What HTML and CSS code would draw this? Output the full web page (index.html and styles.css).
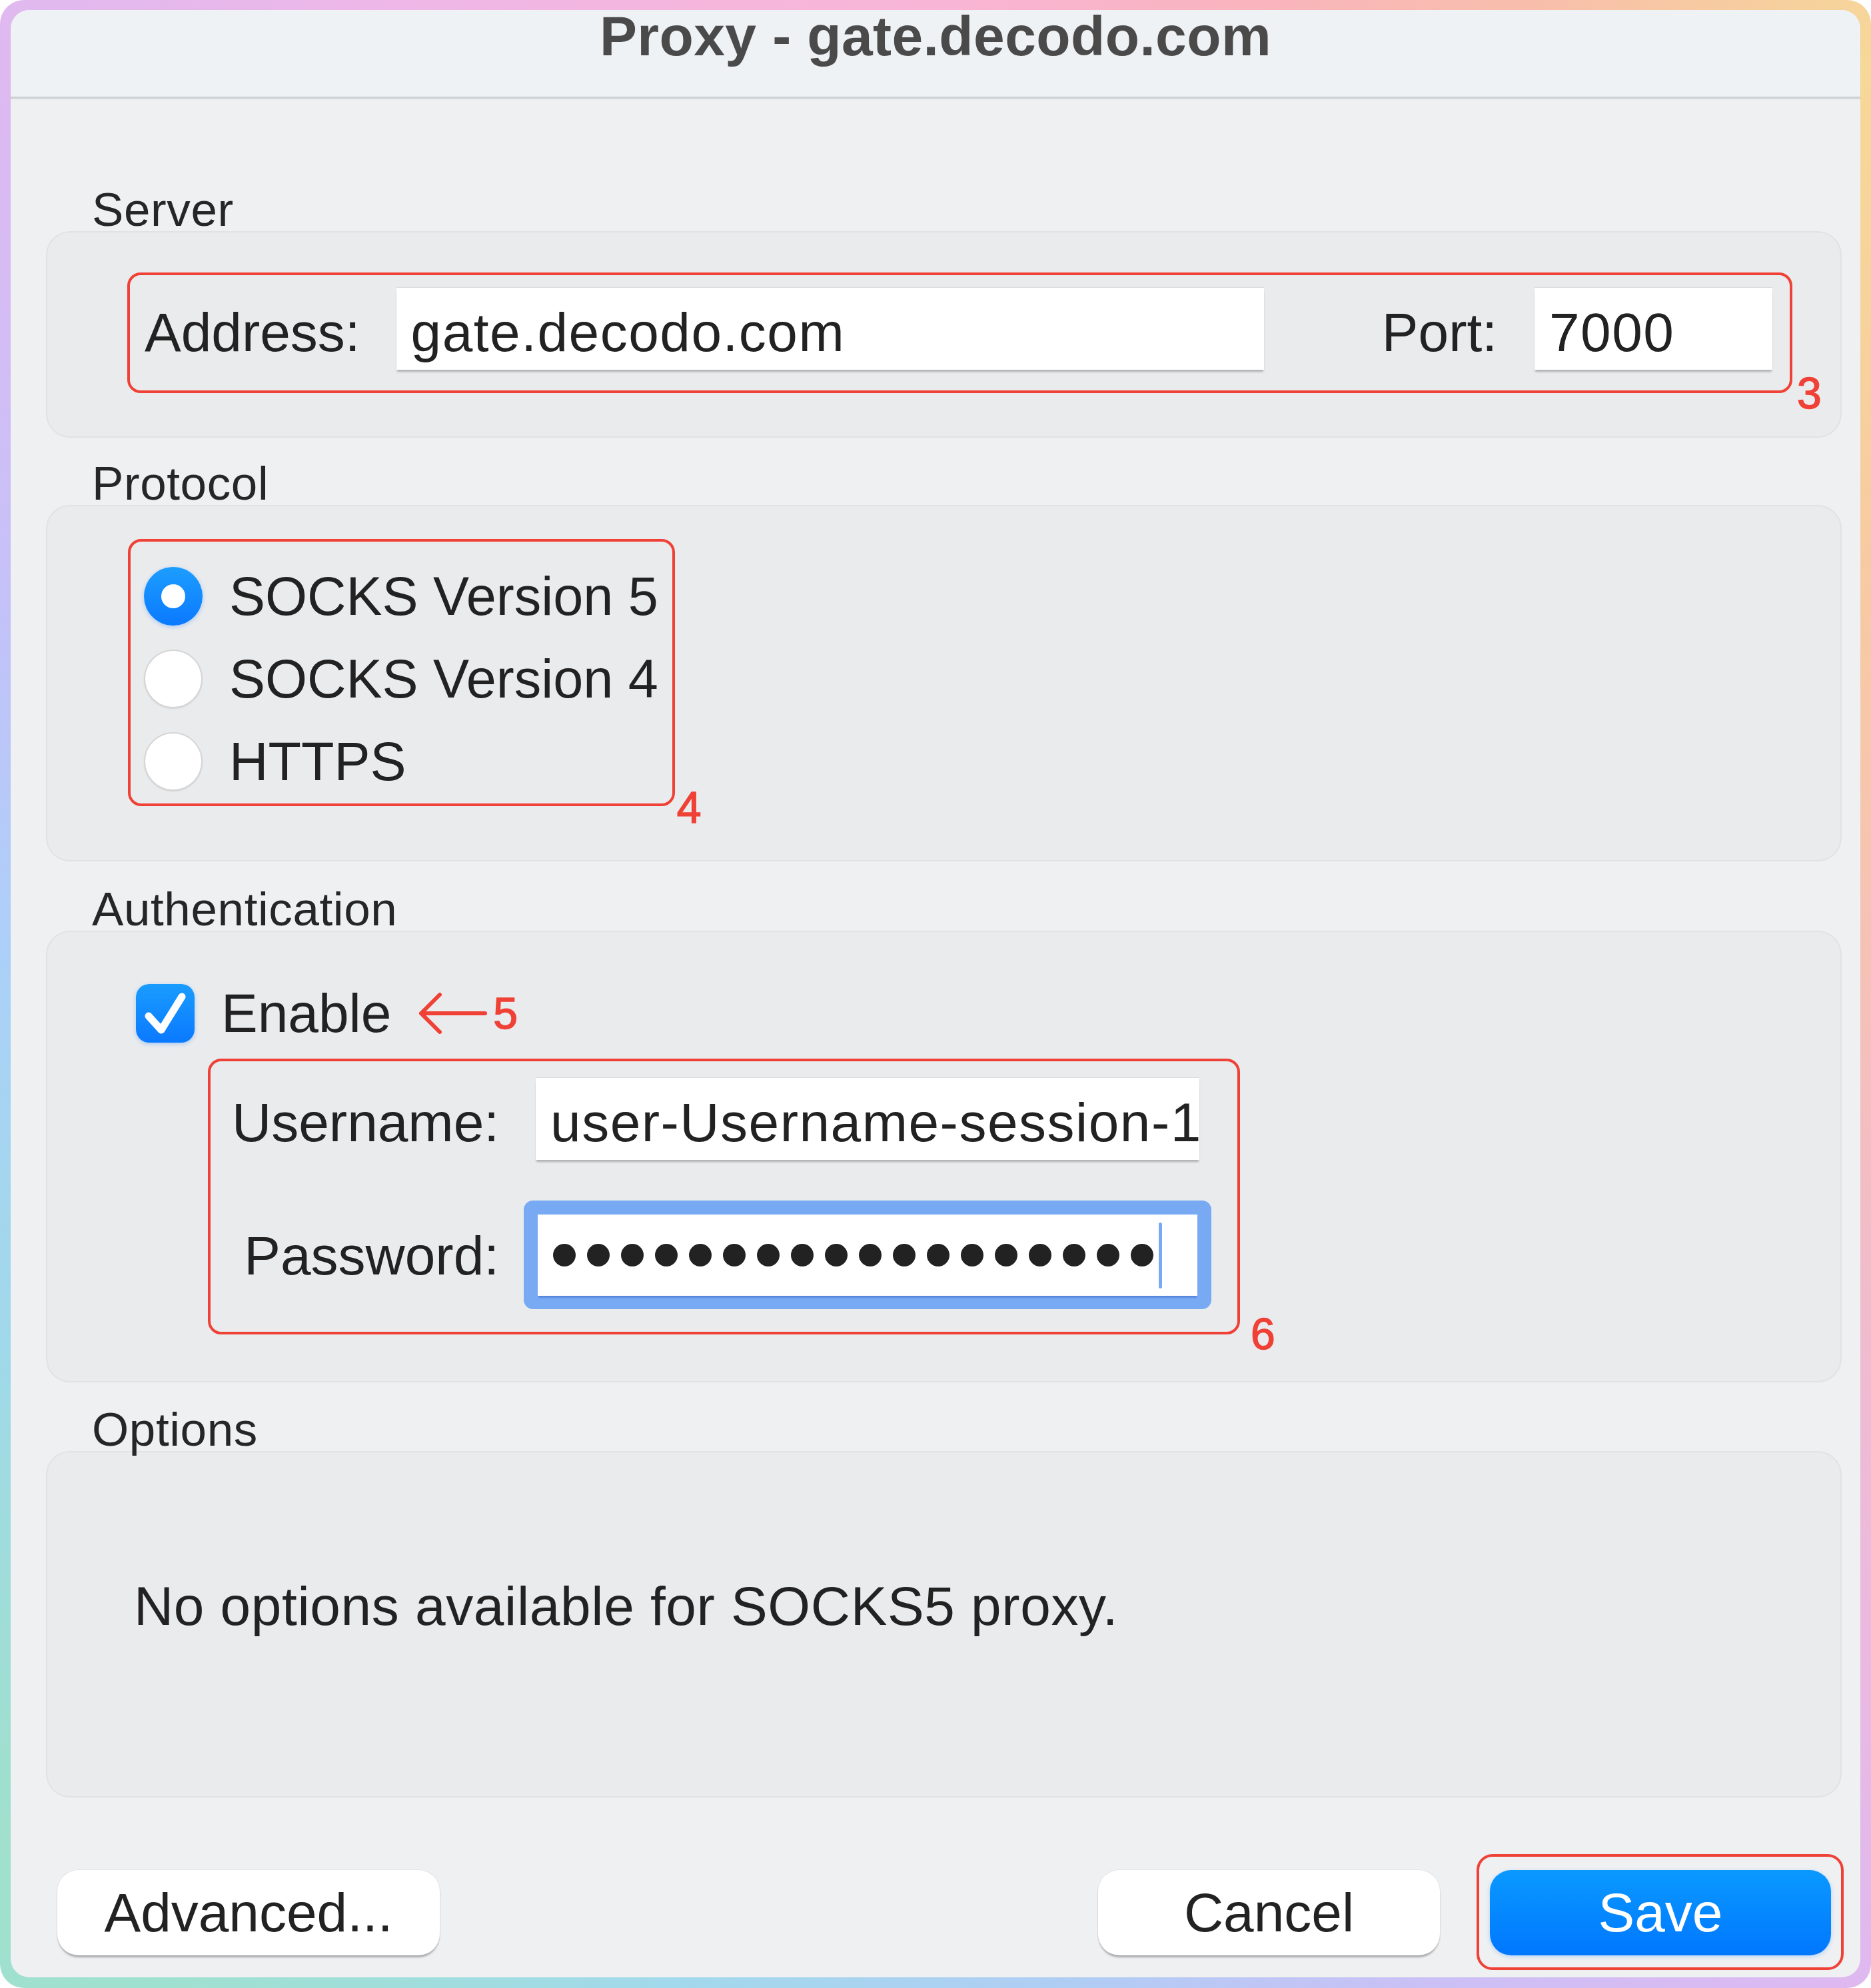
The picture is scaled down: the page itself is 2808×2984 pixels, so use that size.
FILE: index.html
```html
<!DOCTYPE html>
<html lang="en">
<head>
<meta charset="utf-8">
<title>Proxy - gate.decodo.com</title>
<link rel="stylesheet" href="styles.css">
</head>
<body>
<div class="frame">
  <div class="window">
    <header class="titlebar">
      <h1 class="title">Proxy - gate.decodo.com</h1>
    </header>
    <main class="content">
      <section class="group">
        <h2 class="group-label">Server</h2>
        <div class="group-box server-box">
          <div class="mark mark-server">
            <span class="field-label">Address:</span>
            <div class="textfield address">gate.decodo.com</div>
            <span class="field-label port-label">Port:</span>
            <div class="textfield port">7000</div>
            <span class="anno-num num-3">3</span>
          </div>
        </div>
      </section>

      <section class="group group-protocol">
        <h2 class="group-label">Protocol</h2>
        <div class="group-box protocol-box">
          <div class="mark mark-protocol">
            <div class="radio-row"><span class="radio on"></span><span>SOCKS Version 5</span></div>
            <div class="radio-row"><span class="radio"></span><span>SOCKS Version 4</span></div>
            <div class="radio-row"><span class="radio"></span><span>HTTPS</span></div>
            <span class="anno-num num-4">4</span>
          </div>
        </div>
      </section>

      <section class="group group-auth">
        <h2 class="group-label">Authentication</h2>
        <div class="group-box auth-box">
          <div class="enable-row">
            <span class="checkbox">
              <svg viewBox="0 0 88 88" width="88" height="88"><path d="M19 48 L38 69 L69 19" fill="none" stroke="#fff" stroke-width="11" stroke-linecap="round" stroke-linejoin="round"/></svg>
            </span>
            <span class="enable-text">Enable</span>
            <svg class="arrow" viewBox="0 0 104 62" width="104" height="62"><path d="M101 31 H5 M33 3 L5 31 L33 59" fill="none" stroke="#ef4136" stroke-width="6" stroke-linecap="round" stroke-linejoin="round"/></svg>
            <span class="anno-num num-5">5</span>
          </div>
          <div class="mark mark-auth">
            <span class="field-label auth-label">Username:</span>
            <div class="textfield username">user-Username-session-1</div>
            <span class="field-label auth-label pw-label">Password:</span>
            <div class="focus-ring">
              <div class="pwfield">
                <span class="dot"></span><span class="dot"></span><span class="dot"></span><span class="dot"></span><span class="dot"></span><span class="dot"></span>
                <span class="dot"></span><span class="dot"></span><span class="dot"></span><span class="dot"></span><span class="dot"></span><span class="dot"></span>
                <span class="dot"></span><span class="dot"></span><span class="dot"></span><span class="dot"></span><span class="dot"></span><span class="dot"></span>
                <span class="caret"></span>
              </div>
            </div>
            <span class="anno-num num-6">6</span>
          </div>
        </div>
      </section>

      <section class="group group-options">
        <h2 class="group-label">Options</h2>
        <div class="group-box options-box">No options available for SOCKS5 proxy.</div>
      </section>
    </main>
    <footer class="buttons">
      <div class="btn btn-adv">Advanced...</div>
      <div class="btn btn-cancel">Cancel</div>
      <div class="btn btn-save">Save</div>
    </footer>
  </div>
</div>
</body>
</html>
```

FILE: styles.css
```css
* { box-sizing: border-box; }

html, body {
  margin: 0;
  padding: 0;
}

body {
  width: 2808px;
  height: 2984px;
  background: #ffffff;
  font-family: "Liberation Sans", Arial, sans-serif;
  color: #222222;
  overflow: hidden;
}

.frame {
  width: 2808px;
  height: 2984px;
  border-radius: 36px;
  padding: 15px 16px 16px 16px;
  background: conic-gradient(from 0deg at 50% 50%,
    #f8b5d6 0deg, #f9b4bd 18deg, #f8bfaa 32deg, #f6d898 45deg,
    #f7cba2 65deg, #f4bfbd 95deg, #ebb9e0 125deg, #ddb9f1 138deg,
    #c8c1f6 155deg, #b0cdf4 172deg, #a2d9ec 195deg, #9fe1d0 218deg,
    #a0e0cc 228deg, #9fd9e8 248deg, #abd0f7 272deg, #c3c2f8 292deg,
    #dbbaf2 312deg, #edb7e8 330deg, #f6b6dc 348deg, #f8b5d6 360deg);
}

.window {
  height: 2953px;
  background: #eff0f2;
  border-radius: 28px;
  display: flex;
  flex-direction: column;
}

.titlebar {
  height: 133px;
  flex: none;
  background: #eef2f5;
  border-bottom: 3px solid #ccd1d4;
  border-radius: 28px 28px 0 0;
  text-align: center;
  box-shadow: 0 1px 2px rgba(0, 0, 0, 0.06);
}

.title {
  margin: -8px 0 0 0;
  font-size: 84px;
  font-weight: 700;
  line-height: 94px;
  letter-spacing: 0.4px;
  color: #4a4a4a;
}

.content {
  padding: 135px 28px 0 53px;
  display: flex;
  flex-direction: column;
}

.group-protocol { margin-top: 37px; }
.group-auth { margin-top: 40px; }
.group-options { margin-top: 39px; }

.group-label {
  margin: 0;
  padding-left: 69px;
  font-size: 71px;
  font-weight: 400;
  line-height: 64px;
  letter-spacing: 0.6px;
  color: #262626;
}

.group-box {
  background: #eaebed;
  border: 2px solid #e0e2e4;
  border-radius: 36px;
}

/* annotation boxes */
.mark {
  position: relative;
  border: 4px solid #ef4136;
  border-radius: 20px;
}

.anno-num {
  color: #ef4136;
  font-size: 66px;
  line-height: 66px;
  -webkit-text-stroke: 1.5px #ef4136;
}

.num-3, .num-4, .num-6 { position: absolute; }
.num-3 { left: calc(100% + 11px); top: 144px; }
.num-4 { left: calc(100% + 7px); top: 366px; }
.num-6 { left: calc(100% + 20px); top: 376px; }

/* server */
.server-box {
  height: 310px;
  padding: 60px 72px 0 120px;
}

.mark-server {
  height: 181px;
  display: flex;
  align-items: flex-start;
  padding: 19px 26px 0 22px;
}

.field-label {
  flex: none;
  font-size: 82px;
  line-height: 113px;
  padding-top: 10px;
  white-space: nowrap;
  color: #222222;
}

.textfield {
  flex: none;
  height: 123px;
  background: #ffffff;
  font-size: 82px;
  line-height: 113px;
  padding: 10px 0 0 22px;
  letter-spacing: 1.5px;
  white-space: nowrap;
  overflow: hidden;
  box-shadow: 0 4px 3px -1px rgba(0, 0, 0, 0.26), 0 -1px 1px rgba(0, 0, 0, 0.06);
}

.address { width: 1302px; margin-left: 54px; }
.port-label { margin-left: auto; }
.port { width: 357px; margin-left: 56px; }

/* protocol */
.protocol-box {
  height: 535px;
  padding: 49px 0 0 121px;
}

.mark-protocol {
  width: fit-content;
  padding: 20px 21px 1px 20px;
  display: flex;
  flex-direction: column;
}

.radio-row {
  display: flex;
  align-items: center;
  gap: 40px;
  height: 124px;
  font-size: 81px;
  line-height: 124px;
  white-space: nowrap;
}

.radio {
  flex: none;
  width: 88px;
  height: 88px;
  border-radius: 50%;
  background: #ffffff;
  border: 2px solid #d6d6d6;
  box-shadow: 0 1px 2px rgba(0, 0, 0, 0.1);
}

.radio.on {
  border: none;
  background: linear-gradient(#1d9dff, #0a79ff);
  display: flex;
  align-items: center;
  justify-content: center;
  box-shadow: 0 2px 6px rgba(0, 122, 255, 0.3);
}

.radio.on::after {
  content: "";
  width: 36px;
  height: 36px;
  border-radius: 50%;
  background: #ffffff;
}

/* authentication */
.auth-box {
  padding: 78px 0 70px 133px;
}

.enable-row {
  display: flex;
  align-items: center;
  height: 88px;
  font-size: 82px;
  line-height: 88px;
}

.checkbox {
  flex: none;
  width: 88px;
  height: 88px;
  border-radius: 20px;
  background: linear-gradient(#1a9cff, #0a79ff);
  box-shadow: 0 2px 6px rgba(0, 122, 255, 0.3);
  margin-right: 40px;
}

.checkbox svg { display: block; }

.arrow {
  flex: none;
  margin-left: 40px;
}

.num-5 { margin-left: 9px; }

.mark-auth {
  margin: 24px 0 0 108px;
  width: 1549px;
  height: 414px;
  padding: 25px 0 0 32px;
  display: grid;
  grid-template-columns: max-content 996px;
  justify-content: start;
  column-gap: 55px;
  row-gap: 82px;
  align-content: start;
}

.auth-label { justify-self: end; }
.pw-label { padding-top: 5px; }

.username { width: 996px; }

.focus-ring {
  width: 1032px;
  margin: -21px 0 -21px -18px;
  padding: 21px 21px 20px 21px;
  background: #78aaf4;
  border-radius: 14px;
}

.pwfield {
  width: 990px;
  height: 122px;
  background: #ffffff;
  display: flex;
  align-items: center;
  gap: 17px;
  padding-left: 23px;
  box-shadow: 0 4px 2px -1px rgba(40, 90, 190, 0.45);
}

.dot {
  flex: none;
  width: 34px;
  height: 34px;
  border-radius: 50%;
  background: #222222;
}

.caret {
  flex: none;
  width: 5px;
  height: 99px;
  border-radius: 3px;
  background: #78aaf4;
  margin-left: -9px;
}

/* options */
.options-box {
  height: 520px;
  padding: 184px 0 0 130px;
  font-size: 82px;
  line-height: 94px;
  letter-spacing: 0.65px;
  white-space: nowrap;
}

/* buttons */
.buttons {
  flex: none;
  display: flex;
  height: 128px;
  margin-top: 109px;
  padding: 0 44px 0 70px;
}

.btn {
  height: 128px;
  border-radius: 32px;
  background: #ffffff;
  font-size: 82px;
  line-height: 128px;
  text-align: center;
  color: #222222;
  box-shadow: 0 4px 3px -1px rgba(0, 0, 0, 0.28), 0 0 0 1px rgba(0, 0, 0, 0.05);
}

.btn-adv { width: 574px; }
.btn-cancel { width: 513px; margin-left: auto; }

.btn-save {
  position: relative;
  width: 512px;
  margin-left: 75px;
  color: #ffffff;
  background: linear-gradient(#0a99ff, #0077ff);
  box-shadow: 0 2px 6px rgba(0, 122, 255, 0.25);
}

.btn-save::after {
  content: "";
  position: absolute;
  left: -20px;
  right: -19px;
  top: -24px;
  bottom: -22px;
  border: 4px solid #ef4136;
  border-radius: 24px;
}
```
